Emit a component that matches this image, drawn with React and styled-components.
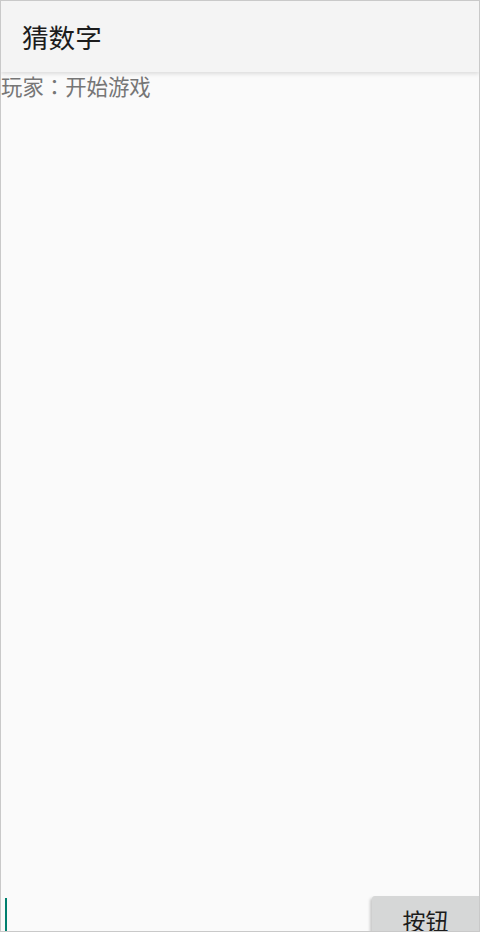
import React from 'react';
import styled, { createGlobalStyle } from 'styled-components';

const Global = createGlobalStyle`
html, body {
  margin: 0;
  padding: 0;
  background: #fafafa;
}
* { box-sizing: border-box; }
`

const Frame = styled.div`
width: 480px;
height: 932px;
border: 1px solid #c9c9c9;
overflow: hidden;
display: flex;
flex-direction: column;
background: #fafafa;
font-family: "Roboto", "Noto Sans CJK SC", sans-serif;
`
const Toolbar = styled.div`
height: 71px;
flex-shrink: 0;
display: flex;
align-items: center;
padding-left: 21px;
background: #f4f4f4;
box-shadow: 0 2px 4px rgba(0, 0, 0, 0.12);
position: relative;
z-index: 1;
`
const Title = styled.div`
font-size: 26.6px;
color: #1c1c1c;
`
const Main = styled.div`
height: 823px;
flex-shrink: 0;
`
const Status = styled.div`
font-family: "Roboto", "Noto Sans CJK JP", sans-serif;
font-size: 21.4px;
line-height: 32px;
color: #767676;
`
const Footer = styled.div`
height: 48px;
flex-shrink: 0;
display: flex;
`
const InputArea = styled.div`
flex: 1;
padding-left: 4px;
padding-top: 3px;
`
const Caret = styled.div`
width: 2px;
height: 40px;
background: #00806f;
`
const Button = styled.button`
width: 107px;
height: 48px;
margin-top: 1px;
border: none;
border-radius: 3px 0 0 0;
background: #d6d7d7;
font-family: inherit;
font-size: 23px;
color: #1c1c1c;
box-shadow: -2px 2px 3px rgba(0, 0, 0, 0.2);
padding: 0;
`

export default function App() {
  return (
    <>
      <Global />
      <Frame>
        <Toolbar>
          <Title>猜数字</Title>
        </Toolbar>
        <Main>
          <Status>玩家：开始游戏</Status>
        </Main>
        <Footer>
          <InputArea>
            <Caret />
          </InputArea>
          <Button>按钮</Button>
        </Footer>
      </Frame>
    </>
  );
}
